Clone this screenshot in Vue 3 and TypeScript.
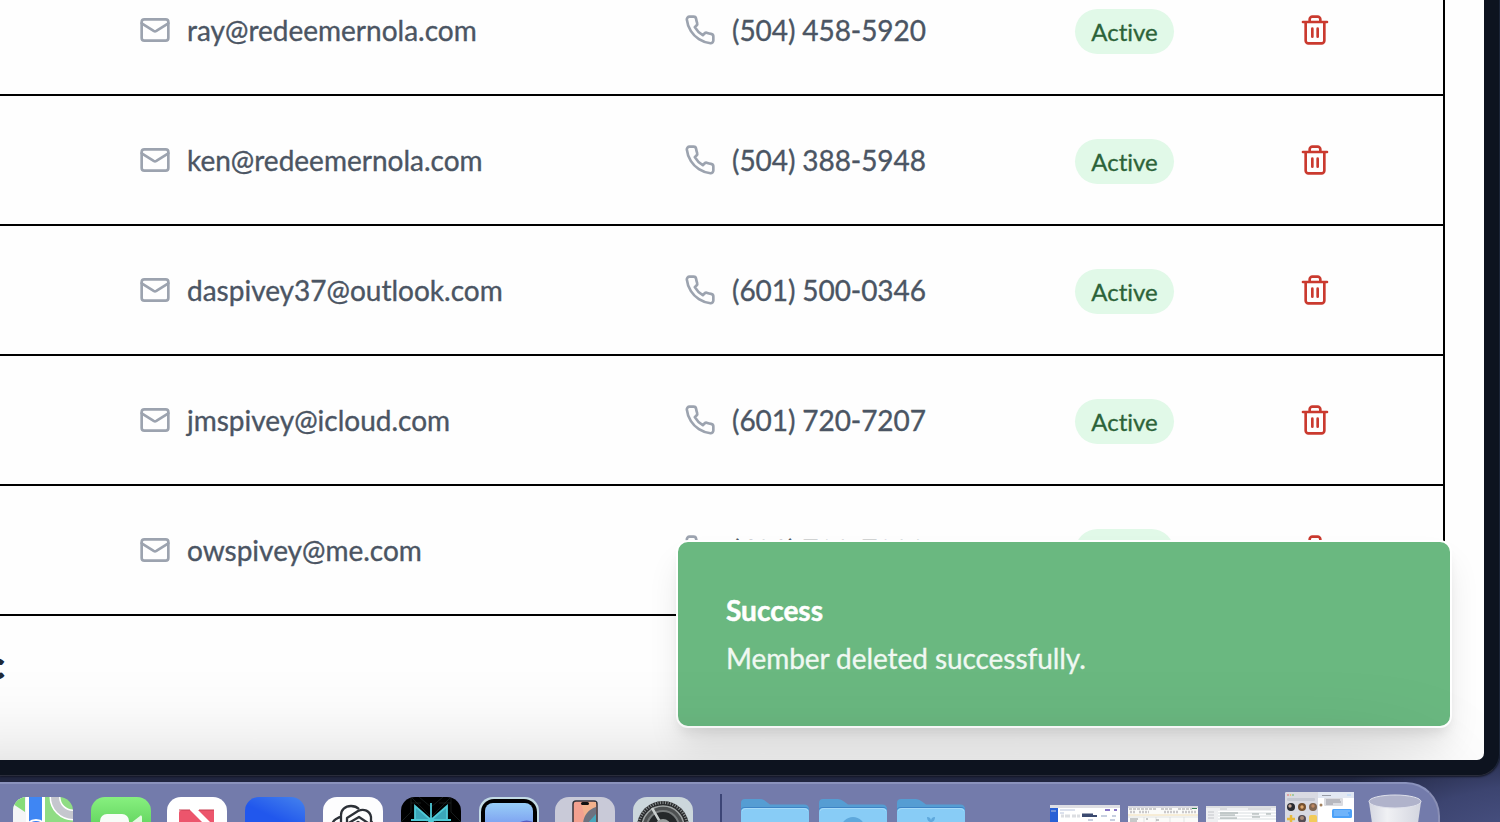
<script setup lang="ts">
interface Member {
  email: string
  phone: string
}

const members: Member[] = [
  { email: 'ray@redeemernola.com', phone: '(504) 458-5920' },
  { email: 'ken@redeemernola.com', phone: '(504) 388-5948' },
  { email: 'daspivey37@outlook.com', phone: '(601) 500-0346' },
  { email: 'jmspivey@icloud.com', phone: '(601) 720-7207' },
  { email: 'owspivey@me.com', phone: '(601) 720-7208' },
]

const knurls = Array.from({ length: 60 }, (_, i) => i * 6)
</script>

<template>
  <div class="desktop">
    <div class="window">
      <main class="page">
        <section class="table">
          <div v-for="m in members" :key="m.email" class="row">
            <div class="cell">
              <svg class="icon" viewBox="0 0 24 24">
                <rect x="2" y="4" width="20" height="16" rx="2" />
                <path d="m22 7-8.991 5.727a2 2 0 0 1-2.009 0L2 7" />
              </svg>
              <span class="value">{{ m.email }}</span>
            </div>
            <div class="cell">
              <svg class="icon" viewBox="0 0 24 24">
                <path
                  d="M22 16.92v3a2 2 0 0 1-2.18 2 19.79 19.79 0 0 1-8.63-3.07 19.5 19.5 0 0 1-6-6 19.79 19.79 0 0 1-3.07-8.67A2 2 0 0 1 4.11 2h3a2 2 0 0 1 2 1.72 12.84 12.84 0 0 0 .7 2.81 2 2 0 0 1-.45 2.11L8.09 9.91a16 16 0 0 0 6 6l1.27-1.27a2 2 0 0 1 2.11-.45 12.84 12.84 0 0 0 2.81.7A2 2 0 0 1 22 16.92z"
                />
              </svg>
              <span class="value number">{{ m.phone }}</span>
            </div>
            <div class="cell"><span class="badge">Active</span></div>
            <button class="delete" aria-label="Delete member">
              <svg class="icon" viewBox="0 0 24 24">
                <path d="M3 6h18M19 6v14c0 1-1 2-2 2H7c-1 0-2-1-2-2V6M8 6V4c0-1 1-2 2-2h4c1 0 2 1 2 2v2M10 11v6M14 11v6" />
              </svg>
            </button>
          </div>
        </section>
        <h2 class="heading">c</h2>
        <div class="toast">
          <div class="toast-title">Success</div>
          <div class="toast-text">Member deleted successfully.</div>
        </div>
        <div class="shade"></div>
      </main>
    </div>

    <div class="dock">
      <div class="app maps">
        <svg viewBox="0 0 60 60">
          <rect width="60" height="60" fill="#8fdc84" />
          <path d="M0 0h14v60H0z" fill="#f4f5f6" />
          <path d="M0 7 12 15V0H0z" fill="#86dc79" />
          <path d="M13 0h3v60h-3zM29 0h3v60h-3z" fill="#fff" />
          <path d="M16 0h13v60H16z" fill="#3f86f3" />
          <circle cx="60" cy="0" r="18" fill="none" stroke="#fff" stroke-width="11" />
          <circle cx="60" cy="0" r="18" fill="none" stroke="#c5c7ce" stroke-width="8" />
          <circle cx="23" cy="34" r="12" fill="#fff" />
          <circle cx="23" cy="34" r="10" fill="#377cf0" />
        </svg>
      </div>
      <div class="app facetime">
        <svg viewBox="0 0 60 60">
          <rect x="9" y="17" width="29" height="27" rx="7" fill="#f8fcf8" />
          <path d="M40 26l9-7c1-1 2 0 2 1v22l-11-7z" fill="#e5f9e3" />
        </svg>
      </div>
      <div class="app news tight">
        <svg viewBox="0 0 60 60">
          <path d="M12 16q0-3 3-3h8l24 24v14L12 25z" fill="#ec556c" />
          <path d="M31 13h16v16z" fill="#ec556c" />
          <path d="M12 13h11M32 13h15" stroke="#c73e50" />
        </svg>
      </div>
      <div class="app blue"></div>
      <div class="app chat">
        <svg viewBox="0 0 60 60" fill="none" stroke="#2c3037" stroke-width="2.3" stroke-linejoin="round">
          <path d="M18 35V18c0-5 4-9 10-9 3 0 6 1 8 3M12 39c-5-6-4-14 1-17 2-1 3-2 5-2M24 34V21l11-7c6-3 12 0 13 6v8M48 28 36 20l-12 7M48 24c5 6 3 14-2 17M26 30l9-5 13 8" />
        </svg>
      </div>
      <div class="app perplexity">
        <svg viewBox="0 0 60 60">
          <path d="M10 0v15L0 25M10 0l40 40M50 0 10 40M50 0v15l10 10M18 0l12 10L42 0M38 6h12M10 6h10" stroke="#252d2d" fill="none" stroke-width=".6" />
          <path d="M14 23V9l16 14zM46 23V9L30 23z" fill="#3ba6b9" />
          <path d="M30 6v30M14 23V9l16 14L46 9v14M10 23h40M30 23 16 36M30 23l14 13" stroke="#4fc9d6" stroke-width="1.8" fill="none" />
        </svg>
      </div>
      <div class="app mirror">
        <svg viewBox="0 0 60 60">
          <defs>
            <linearGradient id="sky" x2="0" y2="1">
              <stop stop-color="#98cef7" />
              <stop offset=".5" stop-color="#7a9bf0" />
            </linearGradient>
          </defs>
          <rect x="2" y="2" width="56" height="56" rx="13" fill="#000" />
          <rect x="6" y="6" width="48" height="48" rx="8" fill="url(#sky)" />
          <path d="M38 27q8-6 16-2v5H38z" fill="#555cc0" />
        </svg>
      </div>
      <div class="app phone tight">
        <svg viewBox="0 0 60 60">
          <rect x="18" y="4" width="24" height="52" rx="3" fill="#f3a190" stroke="#34353c" stroke-width="1.5" />
          <path d="M26 5h15v9L31 25z" fill="#f2b18c" />
          <path d="M41 10c-9 3-13 10-13 18h13z" fill="#6d7280" />
          <path d="M41 17 31 28h10z" fill="#47a8bd" />
          <rect x="26" y="5" width="8" height="3" rx="1.5" fill="#111" />
        </svg>
      </div>
      <div class="app settings">
        <svg viewBox="0 0 60 60">
          <circle cx="30" cy="30" r="26" fill="#292b2d" />
          <path v-for="a in knurls" :key="a" d="M30 4v3" stroke="#8c9192" stroke-width="1" :transform="`rotate(${a} 30 30)`" />
          <circle cx="30" cy="30" r="21" fill="#4d5051" stroke="#a0a5a5" stroke-width="1.4" />
          <circle cx="30" cy="30" r="16" fill="#25282a" stroke="#777b7c" stroke-width="2" />
          <path d="M30 30 19 11M30 30h22M30 30 19 49" stroke="#c9cecd" stroke-width="2.5" />
          <circle cx="30" cy="30" r="8" fill="#999e9e" />
        </svg>
      </div>

      <div class="divider"></div>

      <div class="folders">
        <svg v-for="n in 3" :key="n" class="folder" viewBox="0 0 68 50">
          <path d="M0 12V4q0-4 4-4h15q3 0 6 2.500l4 3h34q5 0 5 5v8H0z" fill="#559dd3" />
          <path d="M0 14v-3q0-3 4-3h60q4 0 4 4v4H0z" fill="#3d83c5" />
          <path d="M0 50V13q0-4 4-4h60q4 0 4 4v37z" fill="#88ccf6" />
          <path d="M1 12q1-2.500 4-2.500h58q3 0 4 2.500" fill="none" stroke="#a5daf8" />
          <circle v-if="n === 2" cx="34" cy="30" r="12" fill="#5ea8dc" />
          <path v-if="n === 3" d="M30 18q4 0 4 4 0-4 4-4 0 4-3 5v8h-2v-8q-3-1-3-5z" fill="#5ea8dc" />
        </svg>
      </div>

      <div class="minimized">
        <svg class="thumb" viewBox="0 0 70 30">
          <rect width="70" height="30" fill="#fff" />
          <rect width="70" height="3" fill="#dedee4" />
          <rect y="3" width="8" height="27" fill="#2860d5" />
          <path d="M1 6h5M10 5h15M10 8h4" stroke="#b9c4dd" />
          <path d="M55 5h5M64 5h3" stroke="#6248b4" stroke-width="1.3" />
          <path d="M11 11h3M15 11h5M22 11h4M27 11h3" stroke="#dcdee2" stroke-width="3" />
          <path d="M32 9.500h11M32 11h15" stroke="#3b4a70" stroke-width="2" />
          <path d="M51 11h6M62 11h4M38 15h5M60 15h5" stroke="#b5c0d6" stroke-width="1.300" />
        </svg>
        <svg class="thumb low" viewBox="0 0 70 30">
          <rect width="70" height="30" fill="#fbfbf9" />
          <rect width="70" height="2" fill="#d9d9e0" />
          <path d="M1 3h27M33 3h12M50 3h14" stroke="#85878a" stroke-width=".8" stroke-dasharray="3 1" />
          <path d="M2 6h6M11 6h10M36 6h15M54 6h14" stroke="#cbc9cb" stroke-width="2.500" stroke-dasharray="2 1" />
          <path d="M64 2.500h5" stroke="#398056" />
          <path d="M0 9h70" stroke="#f2deb4" />
          <path d="M0 11h70M16 11v19M28 11v19M42 11v19M56 11v19M0 18h70" stroke="#d1d3d5" stroke-width=".6" />
          <path d="M2 13h8M2 15h7M18 13h2M28 14h3" stroke="#7a7d80" stroke-width=".8" />
        </svg>
        <svg class="thumb low" viewBox="0 0 70 30">
          <rect width="70" height="30" fill="#eeeff1" />
          <rect x="12" y="5" width="58" height="25" fill="#fff" />
          <path d="M0 1h70" stroke="#dcdee2" stroke-width="2" />
          <path d="M14 3h7M42 3h23M2 6h6M2 9h6M2 12h6" stroke="#b9bdc2" stroke-width=".8" />
          <path d="M12 7h58M12 10h58M12 13h58" stroke="#d8dde0" />
          <path d="M14 7h18M14 9h15M14 12h17M46 8h7M46 11h8M60 8h5" stroke="#84908f" stroke-width=".8" />
        </svg>
        <svg class="thumb tall" viewBox="0 0 69 40">
          <rect width="69" height="40" rx="2" fill="#fff" />
          <path d="M2 0h31v40H0V2q0-2 2-2z" fill="#d9dae2" />
          <circle cx="3" cy="3" r=".8" fill="#e65b57" />
          <circle cx="5.500" cy="3" r=".8" fill="#e5b643" />
          <circle cx="8" cy="3" r=".8" fill="#58b758" />
          <rect x="2" y="6" width="28" height="3" rx="1" fill="#c4c7d1" />
          <rect x="33" width="36" height="6" fill="#e2e8f3" />
          <circle cx="6" cy="15" r="4" fill="#292a30" />
          <circle cx="17" cy="15" r="4" fill="#75502e" />
          <circle cx="28" cy="15" r="4" fill="#80654f" />
          <circle cx="5" cy="14" r="1.700" fill="#c5a695" />
          <circle cx="17" cy="15" r="1.700" fill="#e1aa70" />
          <circle cx="28" cy="14" r="1.700" fill="#bd8762" />
          <path d="M6 23v8M2 27h8" stroke="#e7b93c" stroke-width="2.500" />
          <circle cx="17" cy="27" r="4" fill="#554b53" />
          <circle cx="17" cy="26" r="2" fill="#a98b76" />
          <rect x="24" y="23" width="8" height="8" rx="2" fill="#f2cb59" />
          <rect x="39" y="6" width="19" height="8" rx="1" fill="#dadbe0" />
          <path d="M41 8h14M41 10h15M41 12h7M37 3.500h9" stroke="#777a82" stroke-width=".7" />
          <circle cx="36" cy="13" r="1.500" fill="#a2815e" />
          <rect x="47" y="17" width="20" height="9" rx="1.500" fill="#4da1f8" />
          <path d="M49 19h16M49 21h14M49 23h15M62 3h4" stroke="#a5d1fc" stroke-width=".8" />
        </svg>
      </div>

      <svg class="trash" viewBox="0 0 54 50">
        <defs>
          <linearGradient id="bin">
            <stop stop-color="#d5d7e1" />
            <stop offset=".35" stop-color="#f0f1f4" />
            <stop offset="1" stop-color="#d3d5df" />
          </linearGradient>
        </defs>
        <path d="M1 8h52l-6 42H7z" fill="url(#bin)" />
        <ellipse cx="27" cy="7.500" rx="26" ry="6.500" fill="#b0b3cb" stroke="#dfe1eb" stroke-width="1" />
      </svg>
    </div>
  </div>
</template>

<style>
html,
body {
  overflow: hidden;
}
</style>

<style scoped>
* {
  box-sizing: border-box;
}
.desktop {
  width: 1500px;
  height: 822px;
  overflow: hidden;
  display: flex;
  flex-direction: column;
  font-family: Lato, "Liberation Sans", sans-serif;
  font-variant-ligatures: none;
  background: radial-gradient(ellipse 260px 110px at 1550px 850px, #4f588b, #3c4470 60%, #20253f);
}
.window {
  flex: none;
  width: 1500px;
  height: 776px;
  background: #0d131f;
  border-right: 1px solid #1c2538;
  border-bottom: 1px solid #292c3a;
  border-bottom-right-radius: 22px;
  box-shadow: 0 1px 2px #131726;
  padding-right: 15px;
}
.page {
  position: relative;
  width: 1484px;
  height: 760px;
  background: #fefefe;
  border-bottom-right-radius: 7px;
  overflow: hidden;
}
.table {
  width: 1445px;
  border-right: 2px solid #000;
  margin-top: -34px;
}
.row {
  display: grid;
  grid-template-columns: 545px 391px 224px 32px;
  align-items: center;
  height: 130px;
  padding-left: 139px;
  border-bottom: 2px solid #000;
}
.cell {
  display: flex;
  align-items: center;
  gap: 16px;
  font-size: 28px;
  line-height: 40px;
  color: #4b5563;
  white-space: nowrap;
}
.value {
  -webkit-text-stroke: 0.35px currentColor;
}
.number {
  letter-spacing: -0.08px;
}
.icon {
  flex: none;
  display: block;
  width: 32px;
  height: 32px;
  fill: none;
  stroke: #9ca3af;
  stroke-width: 2;
  stroke-linecap: round;
  stroke-linejoin: round;
}
.delete {
  border: 0;
  padding: 0;
  background: none;
}
.delete .icon {
  stroke: #ca3a2f;
}
.badge {
  width: 99px;
  text-align: center;
  height: 45px;
  margin-top: 3px;
  border-radius: 23px;
  background: #e1f9e8;
  color: #2c6339;
  font-size: 24px;
  line-height: 46px;
  -webkit-text-stroke: 0.3px currentColor;
}
.heading {
  display: flex;
  justify-content: flex-end;
  width: 4px;
  height: 48px;
  margin: 24px 0 0;
  font-size: 38px;
  line-height: 48px;
  font-weight: 900;
  color: #1f2937;
  -webkit-text-stroke: 1.6px currentColor;
}
.toast {
  position: absolute;
  left: 676px;
  top: 540px;
  width: 776px;
  height: 188px;
  padding: 48px;
  border: 2px solid #fff;
  border-radius: 12px;
  background: #6ab880;
  box-shadow: 0 20px 34px -6px rgba(0, 0, 0, 0.12), 0 8px 12px -4px rgba(0, 0, 0, 0.08);
  color: #fff;
  font-size: 28px;
}
.toast-title {
  font-weight: 700;
  line-height: 40px;
  -webkit-text-stroke: 0.5px currentColor;
}
.toast-text {
  margin-top: 8px;
  line-height: 40px;
  letter-spacing: -0.07px;
  color: #f0f8f2;
  -webkit-text-stroke: 0.3px currentColor;
}
.shade {
  position: absolute;
  left: -200px;
  top: 786px;
  width: 1620px;
  height: 160px;
  box-shadow: 0 0 110px rgba(0, 0, 0, 0.27);
}
.dock {
  flex: none;
  display: flex;
  align-items: flex-start;
  width: 1440px;
  height: 80px;
  margin-top: 6px;
  padding: 13px 0 0 13px;
  background: #737bab;
  border-top: 2px solid #8a92bc;
  border-right: 2px solid #8a8fb5;
  border-top-right-radius: 34px;
}
.app {
  flex: none;
  width: 60px;
  height: 60px;
  border-radius: 14px;
  overflow: hidden;
}
.app + .app {
  margin-left: 18px;
}
.app + .app.tight {
  margin-left: 16px;
}
.app svg {
  display: block;
  width: 60px;
  height: 60px;
}
.facetime {
  background: linear-gradient(#87f07f, #5fd15c 55%);
}
.news {
  background: #fff;
}
.blue {
  background: linear-gradient(25deg, #2157ed 60%, #4583ed);
}
.chat {
  background: #fdfdfe;
}
.perplexity {
  background: #000;
}
.mirror {
  background: #c3dbe5;
}
.phone {
  background: #c9cad8;
}
.settings {
  background: #ccd7dc;
}
.divider {
  flex: none;
  width: 2px;
  height: 50px;
  margin: -3px 0 0 27px;
  background: #3c4576;
}
.folders {
  display: flex;
  gap: 10px;
  margin: 2px 0 0 19px;
}
.folder {
  display: block;
  width: 68px;
  height: 50px;
}
.minimized {
  display: flex;
  align-items: flex-start;
  gap: 8px;
  margin: 8px 0 0 85px;
}
.thumb {
  display: block;
  width: 70px;
  height: 30px;
}
.thumb.low {
  margin-top: 1px;
}
.thumb.tall {
  width: 69px;
  height: 40px;
  margin-top: -13px;
  margin-left: 1px;
}
.trash {
  flex: none;
  width: 54px;
  height: 50px;
  margin: -3px 0 0 14px;
}
</style>
